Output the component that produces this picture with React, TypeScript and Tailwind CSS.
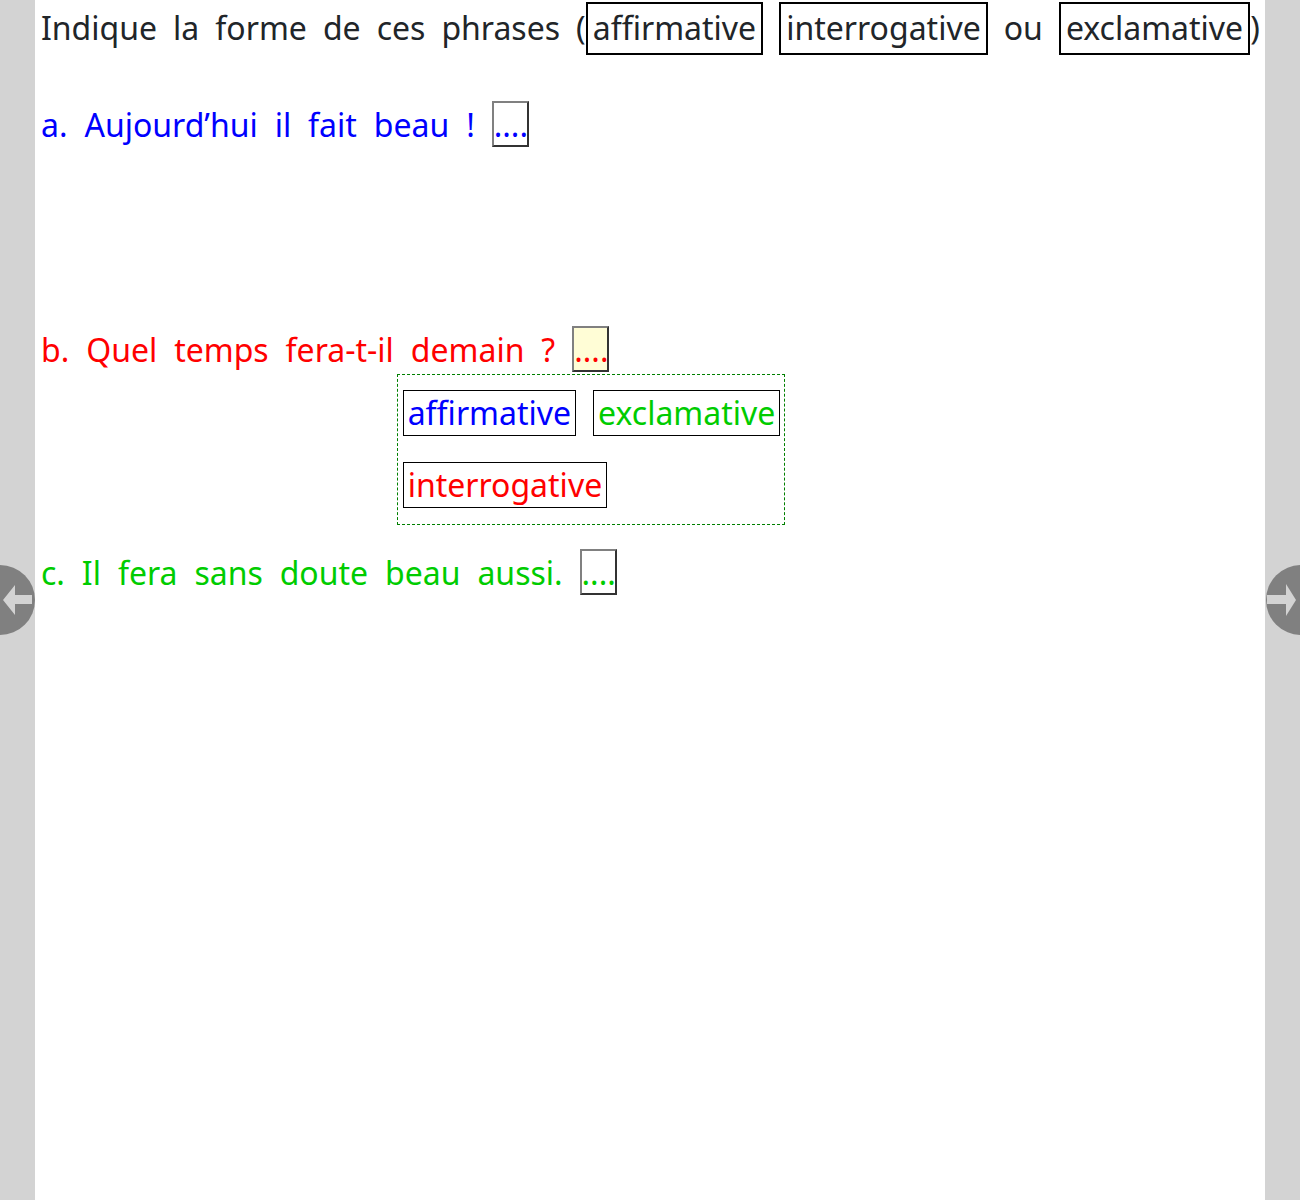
import { useState } from "react";

// small answer slot "...."
const Slot = ({ active }: { active?: boolean }) => (
  <span
    className={
      "inline-block w-[37px] h-[46px] leading-[44px] align-baseline border-2 border-t-[#808080] border-l-[#808080] border-r-[#333333] border-b-[#333333] [word-spacing:0] " +
      (active ? "bg-[#fffdd6]" : "bg-white")
    }
  >
    ....
  </span>
);

const WordBox = ({ children }: { children: string }) => (
  <span className="inline-block border-2 border-black px-[5px] pt-0 pb-[2px] leading-[47px] [word-spacing:0]">
    {children}
  </span>
);

const Choice = ({ label, color }: { label: string; color: string }) => (
  <span className={"inline-block h-[46px] leading-[44px] border border-black px-[4px] " + color}>
    {label}
  </span>
);

const App = () => {
  const [open] = useState(true);

  return (
    <div
      className="flex min-h-screen w-full bg-white text-[32px]"
      style={{ fontFamily: '"Noto Sans", sans-serif' }}
    >
      {/* left bar */}
      <div className="relative w-[35px] shrink-0 bg-[#d3d3d3]">
        <svg className="absolute left-0 top-[565px]" width="35" height="70" viewBox="0 0 35 70">
          <circle cx="0" cy="35" r="35" fill="#808080" />
          <path d="M3 35 L15 20 L15 30 L32 30 L32 39 L15 39 L15 50 Z" fill="#d3d3d3" />
        </svg>
      </div>

      {/* page */}
      <div className="flex-1 min-w-0 px-[6px] [word-spacing:8.6px] whitespace-nowrap">
        <div className="h-[101px] pt-[2px] text-[#212529] [word-spacing:7.7px]">
          Indique la forme de ces phrases (<WordBox>affirmative</WordBox> <WordBox>interrogative</WordBox> ou <WordBox>exclamative</WordBox>)
        </div>

        <div className="h-[225px] text-[#0000ff]">
          a. Aujourd’hui il fait beau ! <Slot />
        </div>

        <div className="h-[223px] text-[#ff0000]">
          b. Quel temps fera-t-il demain ?{" "}
          <span className="relative inline-block">
            <Slot active />
            {open && (
              <div className="absolute left-1/2 top-full -translate-x-1/2 z-10 w-[388px] h-[151px] border border-dashed border-[#008000] bg-white pt-[15px] pl-[5px] flex flex-wrap content-start gap-x-[17px] gap-y-[26px] [word-spacing:0]">
                <Choice label="affirmative" color="text-[#0000ff]" />
                <Choice label="exclamative" color="text-[#00cc00]" />
                <Choice label="interrogative" color="text-[#ff0000]" />
              </div>
            )}
          </span>
        </div>

        <div className="text-[#00cc00]">
          c. Il fera sans doute beau aussi. <Slot />
        </div>
      </div>

      {/* right bar */}
      <div className="relative w-[35px] shrink-0 bg-[#d3d3d3]">
        <svg className="absolute right-0 top-[565px]" width="35" height="70" viewBox="0 0 35 70">
          <circle cx="36" cy="35" r="35" fill="#808080" />
          <path d="M31 35 L21 19 L21 30 L2 30 L2 39 L21 39 L21 51 Z" fill="#d3d3d3" />
        </svg>
      </div>
    </div>
  );
};

export default App;
